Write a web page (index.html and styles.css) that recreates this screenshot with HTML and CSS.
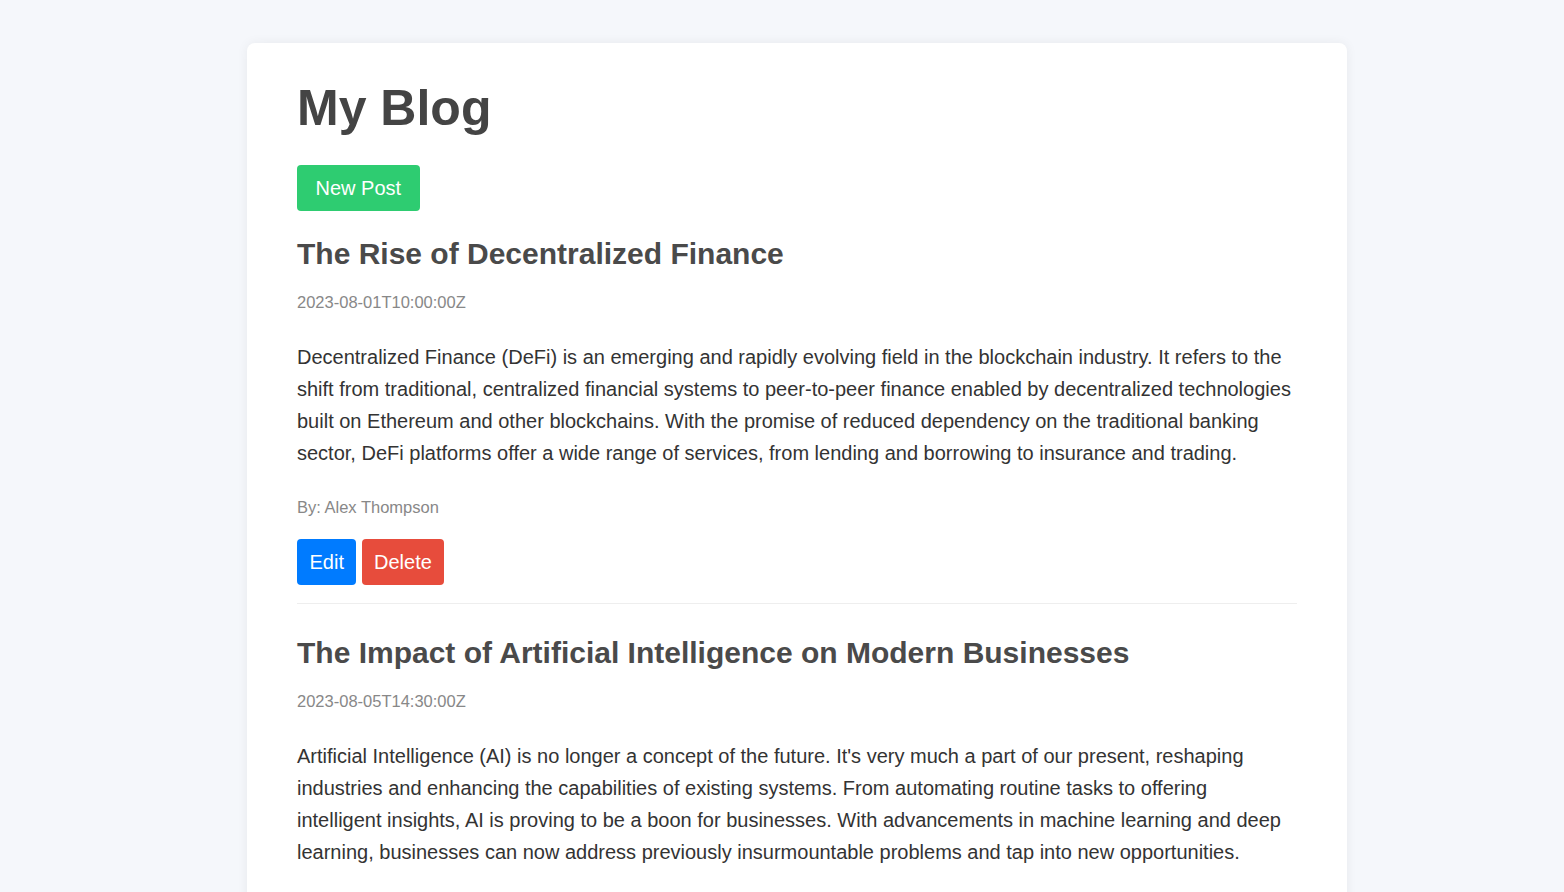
FILE: index.html
```html
<!DOCTYPE html>
<html lang="en">
<head>
<meta charset="utf-8">
<title>My Blog</title>
<link rel="stylesheet" href="styles.css">
</head>
<body>
<div class="page">
  <main class="card">
    <h1 class="title">My Blog</h1>
    <button class="btn btn-new">New Post</button>
    <article class="post">
      <h2 class="post-title">The Rise of Decentralized Finance</h2>
      <p class="post-date">2023-08-01T10:00:00Z</p>
      <p class="post-body">Decentralized Finance (DeFi) is an emerging and rapidly evolving field in the blockchain industry. It refers to the shift from traditional, centralized financial systems to peer-to-peer finance enabled by decentralized technologies built on Ethereum and other blockchains. With the promise of reduced dependency on the traditional banking sector, DeFi platforms offer a wide range of services, from lending and borrowing to insurance and trading.</p>
      <p class="post-author">By: Alex Thompson</p>
      <div class="actions">
        <button class="btn btn-edit">Edit</button>
        <button class="btn btn-delete">Delete</button>
      </div>
    </article>
    <article class="post">
      <h2 class="post-title">The Impact of Artificial Intelligence on Modern Businesses</h2>
      <p class="post-date">2023-08-05T14:30:00Z</p>
      <p class="post-body">Artificial Intelligence (AI) is no longer a concept of the future. It's very much a part of our present, reshaping industries and enhancing the capabilities of existing systems. From automating routine tasks to offering intelligent insights, AI is proving to be a boon for businesses. With advancements in machine learning and deep learning, businesses can now address previously insurmountable problems and tap into new opportunities.</p>
      <p class="post-author">By: Priya Raman</p>
      <div class="actions">
        <button class="btn btn-edit">Edit</button>
        <button class="btn btn-delete">Delete</button>
      </div>
    </article>
  </main>
</div>
</body>
</html>
```
FILE: styles.css
```css
html, body {
  margin: 0;
  padding: 0;
}

body {
  background: #f5f7fb;
  font-family: "Liberation Sans", Arial, sans-serif;
  color: #333;
}

.page {
  padding: 43px 0 40px 30px;
}

.card {
  width: 1000px;
  margin: 0 auto;
  padding: 36px 50px 40px;
  background: #fff;
  border-radius: 8px;
  box-shadow: 0 0 12px rgba(0, 0, 0, 0.06);
}

.title {
  margin: 0 0 28px;
  font-size: 50px;
  font-weight: bold;
  color: #444;
  line-height: 58px;
}

.btn {
  border: none;
  border-radius: 4px;
  color: #fff;
  font-family: "Liberation Sans", Arial, sans-serif;
  font-size: 20px;
  line-height: 26px;
  padding: 10px 12.5px;
  cursor: pointer;
}

.btn-new {
  background: #2ecc71;
  padding: 10px 18.5px;
}

.btn-edit {
  background: #007bff;
}

.btn-delete {
  background: #e74c3c;
  padding: 10px 12px;
}

.post {
  padding-bottom: 18px;
  border-bottom: 1px solid #eee;
}

.post + .post {
  padding-top: 6px;
}

.post-title {
  margin: 23px 0 0;
  font-size: 30px;
  line-height: 40px;
  color: #4a4a4a;
}

.post-date {
  margin: 17px 0 0;
  font-size: 16.5px;
  line-height: 22px;
  color: #888;
}

.post-body {
  margin: 28px 0 0;
  font-size: 20px;
  line-height: 32px;
  color: #333;
}

.post-author {
  margin: 27px 0 0;
  font-size: 16.5px;
  line-height: 22px;
  color: #888;
}

.actions {
  margin-top: 21px;
  font-size: 20px;
}
```
